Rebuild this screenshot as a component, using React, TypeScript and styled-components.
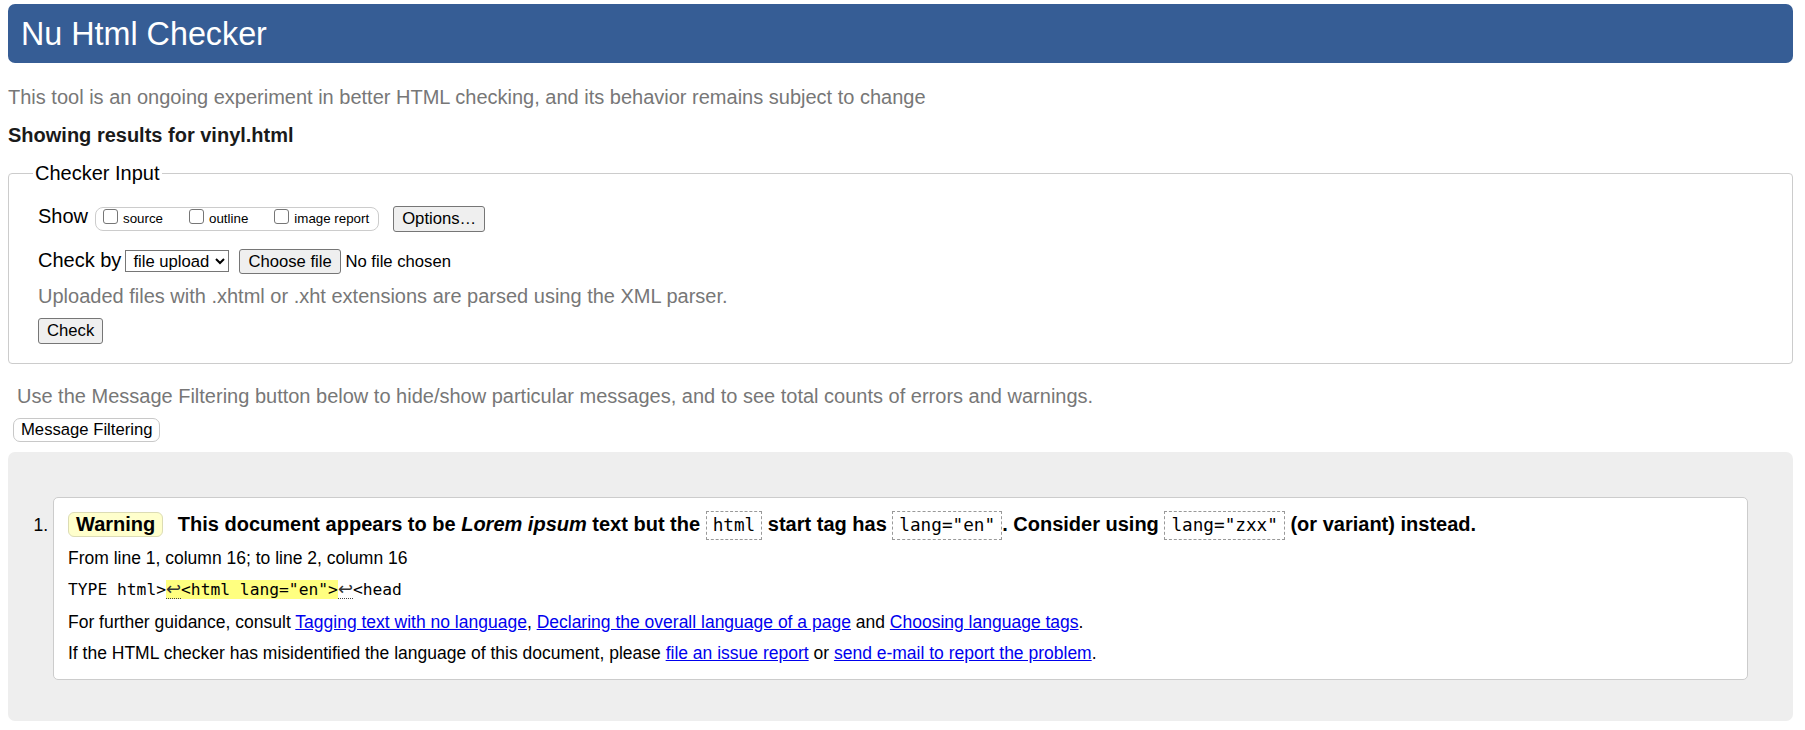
import React from "react";
import styled, { createGlobalStyle } from "styled-components";

const GlobalStyle = createGlobalStyle`
  html, body { margin: 0; padding: 0; background: #fff; }
  body {
    font-family: "Liberation Sans", Arial, sans-serif;
    font-size: 20px;
    color: #000;
  }
`;

const sans = `"Liberation Sans", Arial, sans-serif`;
const mono = `"DejaVu Sans Mono", "Liberation Mono", monospace`;

const Page = styled.div`
  padding: 4px 12px 11px 8px;
`;

const Header = styled.h1`
  margin: 0;
  padding: 11.5px 13px 10.7px;
  background: #365d95;
  color: #fff;
  font-size: 32.3px;
  font-weight: normal;
  line-height: 36.8px;
  border-radius: 7px;
`;

const Lead = styled.p`
  margin: 23px 0 0;
  color: #777;
  line-height: 23px;
`;

const ResultsFor = styled.p`
  margin: 15px 0 0;
  font-weight: bold;
  color: #1a1a1a;
  line-height: 23px;
`;

const Fieldset = styled.fieldset`
  margin: 14.6px 0 0;
  padding: 20px 29px 19px;
  border: 1px solid #ccc;
  border-radius: 4px;
  min-width: 0;
`;

const Legend = styled.legend`
  margin-left: -5px;
  padding: 0 2px;
  line-height: 23px;
`;

const Row = styled.div<{ $mt?: number }>`
  display: flex;
  align-items: flex-start;
  margin-top: ${(p) => p.$mt ?? 0}px;
`;

const FieldLabel = styled.span<{ $gap: number }>`
  line-height: 23px;
  margin-right: ${(p) => p.$gap}px;
  white-space: nowrap;
`;

const ToggleGroup = styled.span`
  box-sizing: border-box;
  display: inline-flex;
  align-items: flex-start;
  height: 24px;
  margin-top: 2.4px;
  padding: 0 9px 0 7px;
  border: 1px solid #ccc;
  border-radius: 8px;
`;

const Toggle = styled.label<{ $first?: boolean }>`
  display: flex;
  align-items: flex-start;
  margin-left: ${(p) => (p.$first ? 0 : 26)}px;
`;

const Checkbox = styled.input`
  appearance: none;
  box-sizing: border-box;
  flex-shrink: 0;
  width: 15px;
  height: 15px;
  margin: 1px 5px 0 0;
  border: 1px solid #767676;
  border-radius: 3px;
  background: #fff;
`;

const ToggleText = styled.span`
  margin-top: 3.4px;
  font-size: 13.33px;
  line-height: 16px;
  white-space: nowrap;
`;

const Button = styled.button<{ $top?: number; $left?: number; $h?: number }>`
  box-sizing: border-box;
  height: ${(p) => p.$h ?? 26}px;
  margin: ${(p) => p.$top ?? 0}px 0 0 ${(p) => p.$left ?? 0}px;
  padding: 0 8px;
  font-family: ${sans};
  font-size: 16.67px;
  line-height: ${(p) => (p.$h ?? 26) - 2}px;
  color: #000;
  background: #efefef;
  border: 1px solid #767676;
  border-radius: 3px;
  white-space: nowrap;
`;

const Select = styled.select`
  box-sizing: border-box;
  width: 104px;
  height: 22px;
  margin-top: 1.4px;
  padding: 0 0 0 3px;
  font-family: ${sans};
  font-size: 16.67px;
  color: #000;
  background: #fff;
  border: 1px solid #767676;
  border-radius: 0;
`;

const FileName = styled.span`
  margin: 3px 0 0 4.7px;
  font-size: 16.67px;
  line-height: 19.2px;
  white-space: nowrap;
`;

const Hint = styled.p`
  margin: 10.6px 0 0;
  color: #777;
  line-height: 23px;
`;

const FilterNote = styled.p`
  margin: 20.6px 0 0;
  padding-left: 9px;
  color: #777;
  line-height: 23px;
`;

const FilterButton = styled.button`
  box-sizing: border-box;
  display: block;
  height: 24px;
  margin: 10.4px 0 0 5px;
  padding: 0 7px;
  font-family: ${sans};
  font-size: 16.67px;
  line-height: 22px;
  color: #000;
  background: #fff;
  border: 1px solid #c8c8c8;
  border-radius: 7px;
`;

const Results = styled.ol`
  margin: 10px 0 0;
  padding: 45px 45px 41px 45px;
  background: #eee;
  border-radius: 7px;
  list-style: decimal outside;
`;

const Message = styled.li`
  padding: 13px 15px 15.2px 14px;
  background: #fff;
  border: 1px solid #ccc;
  border-radius: 5px;
  font-size: 17.5px;

  &::marker {
    font-size: 17.5px;
    font-family: ${sans};
  }
`;

const MessageTitle = styled.p`
  margin: 0 0 -2.2px;
  font-size: 20px;
  font-weight: bold;
`;

const Badge = styled.span`
  display: inline-block;
  margin-right: 9px;
  padding: 0 7px;
  line-height: 23px;
  background: #ffffcc;
  border: 1px solid #dcdcb4;
  border-radius: 6px;
`;

const Code = styled.code`
  display: inline-block;
  padding: 3px 6px;
  font-family: ${mono};
  font-size: 17.7px;
  font-weight: normal;
  line-height: 21px;
  border: 1px dashed #999;
`;

const Detail = styled.p`
  margin: 10px 0 0;
`;

const Extract = styled.p`
  margin: 11px 0 13px;
  font-family: ${mono};
  font-size: 16.3px;
  line-height: 19px;
  white-space: pre;
`;

const Mark = styled.mark`
  background: #ffff80;
  color: inherit;
`;

const LineFeed = styled.span`
  display: inline-block;
  width: 15px;
  font-family: "DejaVu Sans", sans-serif;
  font-size: 18px;
  line-height: 1;
  color: #333;
  border-bottom: 1px dotted #444;
`;

const Link = styled.a`
  color: #0000ee;
  text-decoration: underline;
`;

export default function App() {
  return (
    <>
      <GlobalStyle />
      <Page>
        <Header>Nu Html Checker</Header>
        <Lead>
          This tool is an ongoing experiment in better HTML checking, and its behavior remains subject to change
        </Lead>
        <ResultsFor>Showing results for vinyl.html</ResultsFor>

        <Fieldset>
          <Legend>Checker Input</Legend>
          <Row>
            <FieldLabel $gap={7}>Show</FieldLabel>
            <ToggleGroup>
              <Toggle $first>
                <Checkbox type="checkbox" />
                <ToggleText>source</ToggleText>
              </Toggle>
              <Toggle>
                <Checkbox type="checkbox" />
                <ToggleText>outline</ToggleText>
              </Toggle>
              <Toggle>
                <Checkbox type="checkbox" />
                <ToggleText>image report</ToggleText>
              </Toggle>
            </ToggleGroup>
            <Button $top={1.5} $left={14}>
              Options…
            </Button>
          </Row>
          <Row $mt={16.5}>
            <FieldLabel $gap={4}>Check by</FieldLabel>
            <Select defaultValue="file">
              <option value="address">address</option>
              <option value="file">file upload</option>
              <option value="text">text input</option>
            </Select>
            <Button $top={0.4} $left={10} $h={25}>
              Choose file
            </Button>
            <FileName>No file chosen</FileName>
          </Row>
          <Hint>Uploaded files with .xhtml or .xht extensions are parsed using the XML parser.</Hint>
          <Row $mt={10.4}>
            <Button>Check</Button>
          </Row>
        </Fieldset>

        <FilterNote>
          Use the Message Filtering button below to hide/show particular messages, and to see total counts of errors
          and warnings.
        </FilterNote>
        <FilterButton>Message Filtering</FilterButton>

        <Results>
          <Message>
            <MessageTitle>
              <Badge>Warning</Badge> This document appears to be <em>Lorem ipsum</em> text but the <Code>html</Code>{" "}
              start tag has <Code>lang="en"</Code>. Consider using <Code>lang="zxx"</Code> (or variant) instead.
            </MessageTitle>
            <Detail>From line 1, column 16; to line 2, column 16</Detail>
            <Extract>
              {"TYPE html>"}
              <Mark>
                <LineFeed>↩</LineFeed>
                {'<html lang="en">'}
              </Mark>
              <LineFeed>↩</LineFeed>
              {"<head"}
            </Extract>
            <Detail>
              For further guidance, consult <Link href="#">Tagging text with no language</Link>,{" "}
              <Link href="#">Declaring the overall language of a page</Link> and{" "}
              <Link href="#">Choosing language tags</Link>.
            </Detail>
            <Detail>
              If the HTML checker has misidentified the language of this document, please{" "}
              <Link href="#">file an issue report</Link> or <Link href="#">send e-mail to report the problem</Link>.
            </Detail>
          </Message>
        </Results>
      </Page>
    </>
  );
}
